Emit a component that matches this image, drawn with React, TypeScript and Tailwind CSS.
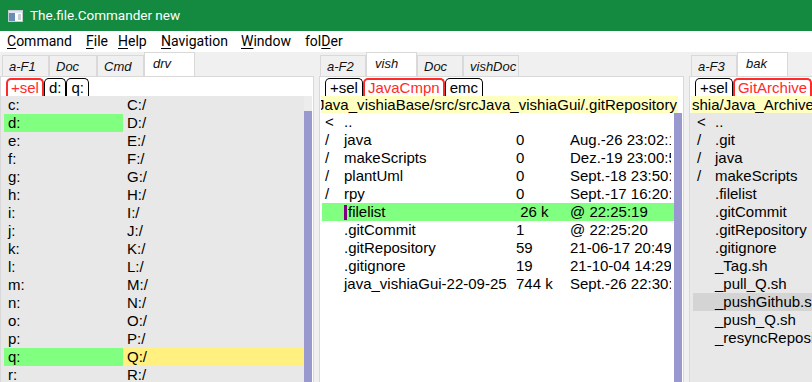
import React from 'react';

type MainTab = { label: string; cls: string; active?: boolean };
type SubTab = { label: string; red?: boolean };

const arial = "font-['Liberation_Sans',Arial,sans-serif]";

const MainTabs = ({ tabs, offset }: { tabs: MainTab[]; offset: string }) => (
  <div className={`flex items-end h-[24px] ${offset}`}>
    {tabs.map((t) => (
      <div
        key={t.label}
        className={`${t.cls} shrink-0 border border-b-0 border-[#d9d9d9] italic text-[13px] text-[#111] ${
          t.active ? 'h-[24px] bg-white leading-[21px] pl-[8px]' : 'h-[21px] bg-[#f0f0f0] leading-[21px] pl-[6px]'
        }`}
      >
        {t.label}
      </div>
    ))}
  </div>
);

const SubTabs = ({ items }: { items: SubTab[] }) => (
  <div className="flex items-end h-[19px] bg-white pl-[5px]">
    {items.map((it) => (
      <div
        key={it.label}
        className={`shrink-0 h-[18px] rounded-t-[5px] text-[15px] border-b-0 ${
          it.red
            ? 'border-2 border-[#ff2a2a] text-[#ff2a2a] px-[3px] leading-[16px]'
            : 'border border-black text-black px-[4px] leading-[17px]'
        }`}
      >
        {it.label}
      </div>
    ))}
  </div>
);

const drives = 'cdefghijklmnopqr'.split('');

const midRows = [
  { m: '<', name: '..', size: '', date: '' },
  { m: '/', name: 'java', size: '0', date: 'Aug.-26 23:02:17' },
  { m: '/', name: 'makeScripts', size: '0', date: 'Dez.-19 23:00:55' },
  { m: '/', name: 'plantUml', size: '0', date: 'Sept.-18 23:50:21' },
  { m: '/', name: 'rpy', size: '0', date: 'Sept.-17 16:20:43' },
  { m: '', name: 'filelist', size: ' 26 k', date: '@ 22:25:19', sel: true },
  { m: '', name: '.gitCommit', size: '1', date: '@ 22:25:20' },
  { m: '', name: '.gitRepository', size: '59', date: '21-06-17 20:49:12' },
  { m: '', name: '.gitignore', size: '19', date: '21-10-04 14:29:33' },
  { m: '', name: 'java_vishiaGui-22-09-25.zip', size: '744 k', date: 'Sept.-26 22:30:10' },
];

const rightRows = [
  { m: '<', name: '..' },
  { m: '/', name: '.git' },
  { m: '/', name: 'java' },
  { m: '/', name: 'makeScripts' },
  { m: '', name: '.filelist' },
  { m: '', name: '.gitCommit' },
  { m: '', name: '.gitRepository' },
  { m: '', name: '.gitignore' },
  { m: '', name: '_Tag.sh' },
  { m: '', name: '_pull_Q.sh' },
  { m: '', name: '_pushGithub.sh', mark: true },
  { m: '', name: '_push_Q.sh' },
  { m: '', name: '_resyncRepository.sh' },
];

const Mn = ({ children }: { children: React.ReactNode }) => <span className="underline underline-offset-2">{children}</span>;

const App = () => {
  return (
    <div className={`w-[812px] h-[382px] overflow-hidden bg-[#f0f0f0] ${arial} text-black`}>
      {/* title bar */}
      <div className="h-[31px] bg-[#138a3f] flex items-center pl-[8px]">
        <svg width="15" height="12" viewBox="0 0 15 12">
          <rect x="0.5" y="0.5" width="14" height="11" fill="#fff" stroke="#c4ccd4" />
          <rect x="1" y="1" width="13" height="2" fill="#dde6ef" />
          <rect x="1" y="3" width="6" height="8" fill="#6c8db3" />
          <rect x="10" y="4" width="3" height="6" fill="#c6ced6" />
        </svg>
        <span className="ml-[7px] text-white text-[13.5px] font-['Roboto',sans-serif]">The.file.Commander new</span>
      </div>

      {/* menu */}
      <div className="h-[21px] bg-white flex items-center pl-[7px] text-[14px] font-['Roboto',sans-serif]">
        <span className="w-[79px]"><Mn>C</Mn>ommand</span>
        <span className="w-[32px]"><Mn>F</Mn>ile</span>
        <span className="w-[43px]"><Mn>H</Mn>elp</span>
        <span className="w-[80px]"><Mn>N</Mn>avigation</span>
        <span className="w-[64px]"><Mn>W</Mn>indow</span>
        <span>fol<Mn>D</Mn>er</span>
      </div>

      <div className="flex h-[330px]">
        {/* left pane */}
        <div className="w-[314px] shrink-0 flex flex-col">
          <MainTabs
            offset="pl-[2px]"
            tabs={[
              { label: 'a-F1', cls: 'w-[47px]' },
              { label: 'Doc', cls: 'w-[48px]' },
              { label: 'Cmd', cls: 'w-[47px]' },
              { label: 'drv', cls: 'w-[51px]', active: true },
            ]}
          />
          <div className="flex-1 flex flex-col border border-b-0 border-[#d9d9d9] bg-white">
            <SubTabs items={[{ label: '+sel', red: true }, { label: 'd:' }, { label: 'q:' }]} />
            <div className="flex flex-1 bg-[#e8e8e8] pl-[3px] text-[15px] leading-[18px]">
              <div className="w-[299px]">
                {drives.map((d) => (
                  <div key={d} className="flex h-[18px]">
                    <div className={`w-[119px] pl-[4px] ${d === 'd' || d === 'q' ? 'bg-[#80ff80]' : ''}`}>{d}:</div>
                    <div className={`w-[180px] pl-[4px] ${d === 'q' ? 'bg-[#fff080]' : ''}`}>{d.toUpperCase()}:/</div>
                  </div>
                ))}
              </div>
              <div className="w-px" />
              <div className="w-[8px] flex flex-col">
                <div className="h-[15px] bg-[#ececec]" />
                <div className="flex-1 bg-[#9999d0]" />
              </div>
              <div className="w-px bg-white" />
            </div>
          </div>
        </div>

        {/* middle pane */}
        <div className="w-[365px] shrink-0 ml-[5px] flex flex-col">
          <MainTabs
            offset="pl-px"
            tabs={[
              { label: 'a-F2', cls: 'w-[46px]' },
              { label: 'vish', cls: 'w-[51px]', active: true },
              { label: 'Doc', cls: 'w-[46px]' },
              { label: 'vishDoc', cls: 'w-[56px]' },
            ]}
          />
          <div className="flex-1 flex flex-col border border-b-0 border-[#d9d9d9] bg-white">
            <SubTabs items={[{ label: '+sel' }, { label: 'JavaCmpn', red: true }, { label: 'emc' }]} />
            <div className="ml-px w-[357px] h-[17px] bg-[#ffffc0] flex justify-end overflow-hidden whitespace-nowrap text-[15px] leading-[17px] pr-px">
              <span className="shrink-0 tracking-[0.03px]">D:/vishia/Java/cmpnJava_vishiaBase/src/srcJava_vishiaGui/.gitRepository</span>
            </div>
            <div className="flex flex-1 bg-white pl-[2px] text-[15px] leading-[18px]">
              <div className="w-[352px]">
                {midRows.map((r) => (
                  <div key={r.name} className={`flex h-[18px] whitespace-nowrap ${r.sel ? 'bg-[#80ff80]' : ''}`}>
                    <div className="w-[19px] shrink-0 pl-[3px]">{r.m}</div>
                    <div className="w-[167px] shrink-0 pl-[3px] overflow-hidden">
                      {r.sel ? (
                        <>
                          <span className="inline-block w-[3px] h-[15px] bg-[#800080] align-[-3px] mr-px" />
                          {r.name}
                        </>
                      ) : (
                        r.name
                      )}
                    </div>
                    <div className="w-[59px] shrink-0 pl-[8px] whitespace-pre">{r.size}</div>
                    <div className="w-[104px] shrink-0 pl-[3px] overflow-hidden">{r.date}</div>
                  </div>
                ))}
              </div>
              <div className="w-[8px] bg-[#9999d0]" />
              <div className="w-px bg-white" />
            </div>
          </div>
        </div>

        {/* right pane */}
        <div className="w-[300px] shrink-0 ml-[5px] flex flex-col">
          <MainTabs
            offset="pl-[2px]"
            tabs={[
              { label: 'a-F3', cls: 'w-[46px]' },
              { label: 'bak', cls: 'w-[51px]', active: true },
            ]}
          />
          <div className="flex-1 flex flex-col border border-b-0 border-[#d9d9d9] bg-white">
            <SubTabs items={[{ label: '+sel' }, { label: 'GitArchive', red: true }]} />
            <div className="ml-px h-[17px] bg-[#ffffc0] overflow-hidden whitespace-nowrap text-[15px] leading-[17px] pl-px">
              shia/Java_Archive/srcJava_vishiaGui
            </div>
            <div className="flex-1 bg-[#e8e8e8] pl-[3px] text-[15px] leading-[18px]">
              {rightRows.map((r) => (
                <div key={r.name} className={`flex h-[18px] whitespace-nowrap ${r.mark ? 'bg-[#d4d4d4]' : ''}`}>
                  <div className="w-[19px] shrink-0 pl-[4px]">{r.m}</div>
                  <div className="pl-[3px]">{r.name}</div>
                </div>
              ))}
            </div>
          </div>
        </div>
      </div>
    </div>
  );
};

export default App;
